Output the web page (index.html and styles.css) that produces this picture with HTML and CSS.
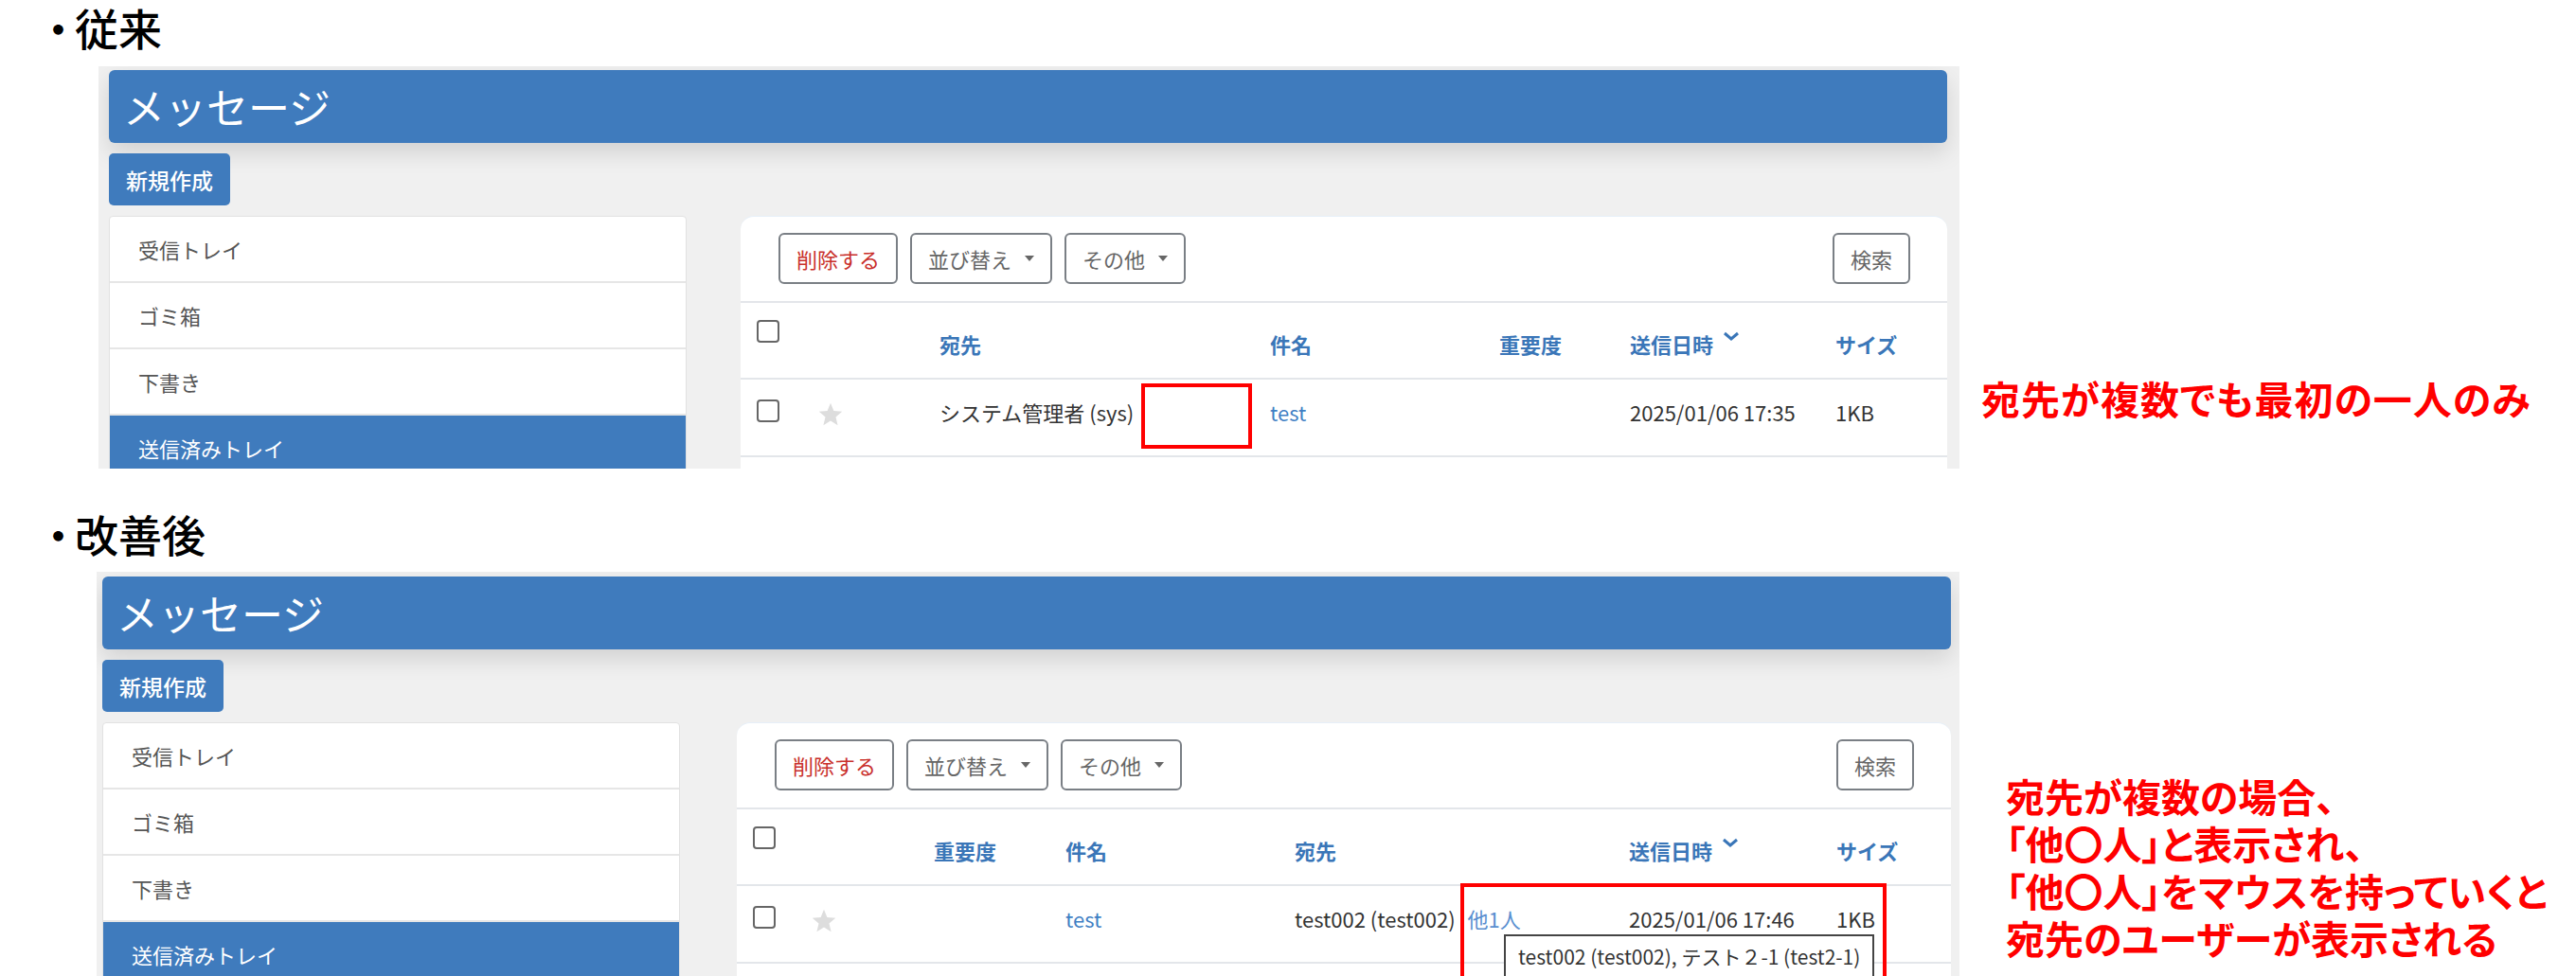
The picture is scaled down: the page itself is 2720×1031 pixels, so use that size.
FILE: index.html
```html
<!DOCTYPE html>
<html lang="ja">
<head>
  <meta charset="UTF-8"/>
  <title>メッセージ 宛先表示の改善</title>
  <link rel="stylesheet" href="styles.css">
</head>
<body>

  <!-- before -->
  <section class="compare">
    <h2 class="compare-title"><span class="bullet">・</span>従来</h2>
    <div class="compare-row">
      <div class="panel">
        <div class="page-header">メッセージ</div>
        <button class="btn-new">新規作成</button>
        <div class="panel-body">
          <ul class="folders">
            <li>受信トレイ</li>
            <li>ゴミ箱</li>
            <li>下書き</li>
            <li class="active">送信済みトレイ</li>
          </ul>
          <div class="mail-card">
            <div class="toolbar">
              <button class="btn btn-delete">削除する</button>
              <button class="btn">並び替え<span class="caret"></span></button>
              <button class="btn">その他<span class="caret"></span></button>
              <button class="btn btn-search">検索</button>
            </div>
            <div class="mail-row mail-head cols-old">
              <div class="cell-check"><span class="checkbox"></span></div>
              <div></div>
              <div>宛先</div>
              <div>件名</div>
              <div>重要度</div>
              <div>送信日時<svg class="sort-icon" width="18" height="10" viewBox="0 0 18 10"><polyline points="2,2 9,8 16,2" fill="none" stroke="#3a76b8" stroke-width="3"/></svg></div>
              <div>サイズ</div>
            </div>
            <div class="mail-row cols-old">
              <div class="cell-check"><span class="checkbox"></span></div>
              <div class="cell-star"><svg width="28" height="28" viewBox="0 0 24 24"><polygon points="12,1.5 14.9,8.6 22.5,9.2 16.7,14.1 18.5,21.6 12,17.6 5.5,21.6 7.3,14.1 1.5,9.2 9.1,8.6" fill="#dddddd"/></svg></div>
              <div>システム管理者 (sys)</div>
              <div><span class="link">test</span></div>
              <div></div>
              <div>2025/01/06 17:35</div>
              <div>1KB</div>
            </div>
            <div class="mark mark-old"></div>
          </div>
        </div>
      </div>
      <p class="note note-old">宛先が複数でも最初の一人のみ</p>
    </div>
  </section>

  <!-- after -->
  <section class="compare">
    <h2 class="compare-title second"><span class="bullet">・</span>改善後</h2>
    <div class="compare-row">
      <div class="panel panel-after">
        <div class="page-header">メッセージ</div>
        <button class="btn-new">新規作成</button>
        <div class="panel-body">
          <ul class="folders">
            <li>受信トレイ</li>
            <li>ゴミ箱</li>
            <li>下書き</li>
            <li class="active">送信済みトレイ</li>
          </ul>
          <div class="mail-card">
            <div class="toolbar">
              <button class="btn btn-delete">削除する</button>
              <button class="btn">並び替え<span class="caret"></span></button>
              <button class="btn">その他<span class="caret"></span></button>
              <button class="btn btn-search">検索</button>
            </div>
            <div class="mail-row mail-head cols-new">
              <div class="cell-check"><span class="checkbox"></span></div>
              <div></div>
              <div>重要度</div>
              <div>件名</div>
              <div>宛先</div>
              <div>送信日時<svg class="sort-icon" width="18" height="10" viewBox="0 0 18 10"><polyline points="2,2 9,8 16,2" fill="none" stroke="#3a76b8" stroke-width="3"/></svg></div>
              <div>サイズ</div>
            </div>
            <div class="mail-row cols-new">
              <div class="cell-check"><span class="checkbox"></span></div>
              <div class="cell-star"><svg width="28" height="28" viewBox="0 0 24 24"><polygon points="12,1.5 14.9,8.6 22.5,9.2 16.7,14.1 18.5,21.6 12,17.6 5.5,21.6 7.3,14.1 1.5,9.2 9.1,8.6" fill="#dddddd"/></svg></div>
              <div></div>
              <div><span class="link">test</span></div>
              <div>test002 (test002)<span class="link link-more">他1人</span></div>
              <div>2025/01/06 17:46</div>
              <div>1KB</div>
            </div>
            <div class="tooltip">test002 (test002), テスト２-1 (test2-1)</div>
            <div class="mark mark-new"></div>
          </div>
        </div>
      </div>
      <p class="note note-new">
        <span class="note-line">宛先が複数の場合、</span>
        <span class="note-line">「他〇人」と表示され、</span>
        <span class="note-line">「他〇人」をマウスを持っていくと</span>
        <span class="note-line">宛先のユーザーが表示される</span>
      </p>
    </div>
  </section>

</body>
</html>
```

FILE: styles.css
```css
* { box-sizing: border-box; margin: 0; padding: 0; }
html, body {
  height: 100%;
  overflow: hidden;
}

body {
  width: 2720px;
  background: #fff;
  color: #333;
  font-family: "Noto Sans CJK JP", "Noto Sans", sans-serif;
}

.compare-title {
  font-size: 46px;
  font-weight: 500;
  line-height: 56px;
  padding-left: 50px;
  color: #000;
  font-feature-settings: "palt";
}
.compare-title.second { margin-top: 40px; }
.bullet { margin-right: 6px; }

.compare-row {
  display: flex;
  align-items: flex-start;
  margin-top: 14px;
}
.second + .compare-row { margin-top: 13px; }

/* screenshot frame */
.panel {
  margin-left: 104px;
  width: 1965px;
  height: 425px;
  overflow: hidden;
  background: #f0f0f0;
  padding: 4px 13px 0 11px;
}
.panel-after {
  margin-left: 102px;
  width: 1967px;
  height: 440px;
  padding: 5px 9px 0 6px;
}

.page-header {
  height: 77px;
  padding-left: 15px;
  background: #3f7bbd;
  color: #fff;
  font-size: 44px;
  line-height: 77px;
  border-radius: 6px;
  box-shadow: 0 10px 24px rgba(0, 0, 0, 0.13);
}

.btn-new {
  display: block;
  margin-top: 11px;
  width: 128px;
  height: 55px;
  background: #3f7bbd;
  color: #fff;
  border: none;
  border-radius: 5px;
  font-family: inherit;
  font-size: 23px;
  font-weight: 500;
}

.panel-body {
  display: flex;
  align-items: flex-start;
  gap: 57px;
  margin-top: 11px;
}
.panel-after .panel-body { gap: 60px; }

.folders {
  width: 610px;
  flex-shrink: 0;
  list-style: none;
  background: #fff;
  border: 1px solid #e2e2e2;
  border-radius: 4px 4px 0 0;
}
.folders li {
  height: 70px;
  line-height: 68px;
  padding-left: 30px;
  font-size: 22px;
  color: #555;
  border-bottom: 2px solid #e6e6e6;
}
.folders li.active {
  background: #3f7bbd;
  border-color: #3f7bbd;
  color: #fff;
}

.mail-card {
  flex: 1;
  position: relative;
  min-height: 420px;
  background: #fff;
  border-top: 1px solid #e6eff8;
  border-radius: 14px 14px 0 0;
}

.toolbar {
  display: flex;
  gap: 13px;
  padding: 17px 39px 18px 40px;
  border-bottom: 2px solid #e3e6ea;
}
.btn {
  display: flex;
  align-items: center;
  height: 54px;
  padding: 0 17px;
  background: #fff;
  color: #666;
  border: 2px solid #7a7f85;
  border-radius: 6px;
  font-family: inherit;
  font-size: 22px;
}
.btn-delete { color: #c9302c; }
.btn-search { margin-left: auto; }
.caret {
  margin-left: 14px;
  border-top: 6px solid #666;
  border-left: 5px solid transparent;
  border-right: 5px solid transparent;
}

.mail-row {
  display: grid;
  height: 82px;
  padding-left: 17px;
  border-bottom: 2px solid #e3e6ea;
  font-size: 22px;
  line-height: 32px;
  white-space: nowrap;
}
.mail-row > div { padding-top: 18px; }
.mail-row > .cell-check { padding-top: 21px; }
.mail-row > .cell-star { padding-top: 23px; }
.cell-star svg { display: block; }

.mail-head {
  height: 81px;
  font-weight: 700;
  color: #3a76b8;
}
.mail-head > div { padding-top: 27px; }
.mail-head > .cell-check { padding-top: 18px; }

.cols-old { grid-template-columns: 64px 129px 349px 242px 138px 217px 1fr; }
.cols-new { grid-template-columns: 61px 130px 139px 242px 353px 219px 1fr; }

.checkbox {
  display: block;
  width: 24px;
  height: 24px;
  border: 2px solid #666;
  border-radius: 4px;
}

.sort-icon {
  vertical-align: top;
  margin: 3px 0 0 10px;
}

.link { color: #3f7fc4; }
.link-more { margin-left: 13px; color: #5a8fd0; }

.tooltip {
  position: absolute;
  left: 810px;
  top: 223px;
  padding: 6px 13px;
  background: #fff;
  border: 2px solid #444;
  font-size: 21px;
  line-height: 30px;
  white-space: nowrap;
}

/* red annotation frames */
.mark {
  position: absolute;
  border: 4px solid #ff0000;
}
.mark-old { left: 423px; top: 176px; width: 117px; height: 69px; }
.mark-new { left: 764px; top: 169px; width: 450px; height: 140px; }

.note {
  color: #ff0000;
  font-size: 41px;
  font-weight: 700;
  line-height: 50px;
  white-space: nowrap;
  font-feature-settings: "palt";
}
.note-old { margin: 325px 0 0 23px; letter-spacing: 1px; }
.note-new { margin: 211px 0 0 49px; }
.note-line { display: block; height: 50px; }
```
